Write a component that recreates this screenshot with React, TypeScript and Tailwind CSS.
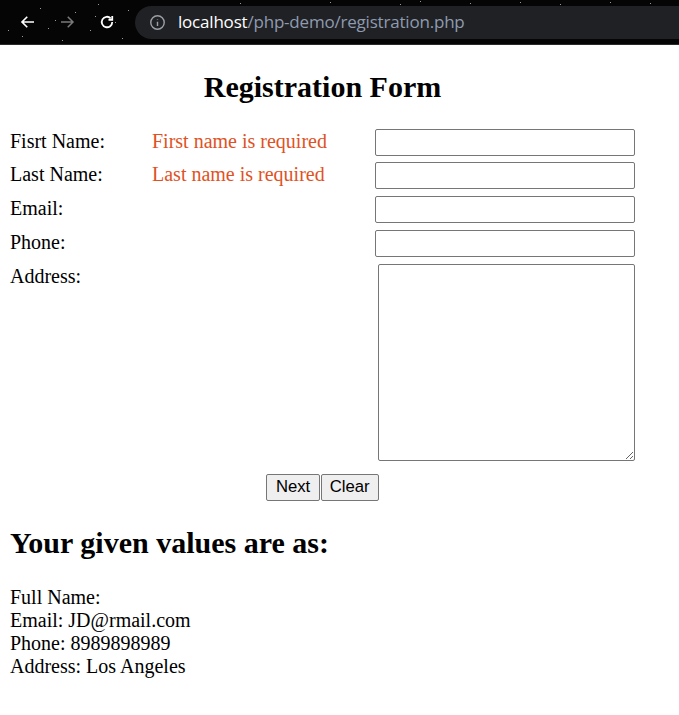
import React from "react"

// Simple PHP-style registration page, rendered at 125% browser zoom

const serif = { fontFamily: '"Liberation Serif", "Times New Roman", serif' }

const STARS = [
  [8, 30], [22, 36], [40, 8], [55, 20], [62, 40], [75, 12], [90, 30], [98, 4],
  [115, 22], [122, 38], [128, 10], [240, 3], [300, 6], [330, 2], [400, 4],
  [420, 1], [470, 3], [520, 2], [560, 4], [610, 2], [650, 3], [95, 16], [48, 28],
]

function BrowserBar() {
  return (
    <div className="relative flex h-[45px] items-center border-b border-[#2a2a2a] bg-[#050505]">
      {STARS.map(([x, y], i) => (
        <span
          key={i}
          className="absolute h-px w-px bg-[#9a9a9a]"
          style={{ left: x, top: y }}
        />
      ))}
      <div className="relative flex w-[135px] items-center pl-[19px]">
        {/* back */}
        <svg width="18" height="18" viewBox="0 0 24 24" fill="none" stroke="#ffffff" strokeWidth="2.2">
          <path d="M20 12H5M11 5l-7 7 7 7" />
        </svg>
        {/* forward */}
        <svg className="ml-[21px]" width="18" height="18" viewBox="0 0 24 24" fill="none" stroke="#7a7a7a" strokeWidth="2">
          <path d="M4 12h15M13 5l7 7-7 7" />
        </svg>
        {/* reload */}
        <svg className="ml-[22px]" width="18" height="18" viewBox="0 0 24 24" fill="none" stroke="#ffffff" strokeWidth="2.4">
          <path d="M19 12a7 7 0 1 1-2.05-4.95" />
          <path d="M19 4v5h-5" />
        </svg>
      </div>
      <div className="relative flex h-[33px] flex-1 items-center rounded-l-full bg-[#202124] pl-[14px]">
        <svg width="17" height="17" viewBox="0 0 24 24" fill="none" stroke="#9aa0a6" strokeWidth="2">
          <circle cx="12" cy="12" r="9.5" />
          <path d="M12 11v6M12 7.2v.6" />
        </svg>
        <span className="ml-[12px] text-[17px] tracking-[-0.2px]" style={{ fontFamily: '"Open Sans", Roboto, sans-serif' }}>
          <span className="text-white">localhost</span>
          <span className="text-[#8e9bb0]">/php-demo/registration.php</span>
        </span>
      </div>
    </div>
  )
}

function Row({ label, error, children }: { label: string; error?: string; children: React.ReactNode }) {
  return (
    <div className="flex items-start">
      <div className="w-[142px] pt-px leading-[23px]">{label}</div>
      <div className="w-[223px] pt-px leading-[23px] text-[#e0521f]">{error}</div>
      <div className="flex flex-1 justify-end">{children}</div>
    </div>
  )
}

const inputCls = "h-[27px] w-[260px] rounded-[2px] border border-[#767676] bg-white outline-none"

export default function App() {
  return (
    <main className="min-h-screen bg-white text-[20px] text-black" style={serif}>
      <BrowserBar />

      <div className="ml-[10px] w-[625px]">
        <h2 className="mt-[25px] mb-[24px] text-center text-[30px] font-bold leading-[34.5px]">Registration Form</h2>

        <form className="flex flex-col gap-[6.75px]" onSubmit={(e) => e.preventDefault()}>
          <Row label="Fisrt Name:" error="First name is required">
            <input className={inputCls} />
          </Row>
          <Row label="Last Name:" error="Last name is required">
            <input className={inputCls} />
          </Row>
          <Row label="Email:">
            <input className={inputCls} />
          </Row>
          <Row label="Phone:">
            <input className={inputCls} />
          </Row>
          <Row label="Address:">
            <textarea className="h-[197px] w-[257px] rounded-[2px] border border-[#767676] bg-white outline-none" />
          </Row>

          <div className="mt-[7px] flex justify-center" style={{ fontFamily: '"Liberation Sans", Arial, sans-serif' }}>
            <button type="submit" className="h-[27px] rounded-[2px] border border-[#767676] bg-[#efefef] px-[8.5px] text-[16.7px] leading-none">
              Next
            </button>
            <button type="reset" className="ml-px h-[27px] rounded-[2px] border border-[#767676] bg-[#efefef] px-[8px] text-[16.7px] leading-none">
              Clear
            </button>
          </div>
        </form>

        <h2 className="mt-[25px] mb-[25px] text-[30px] font-bold leading-[34.5px]">Your given values are as:</h2>

        <div className="leading-[23px]">
          <div>Full Name: </div>
          <div>Email: JD@rmail.com</div>
          <div>Phone: 8989898989</div>
          <div>Address: Los Angeles</div>
        </div>
      </div>
    </main>
  )
}
